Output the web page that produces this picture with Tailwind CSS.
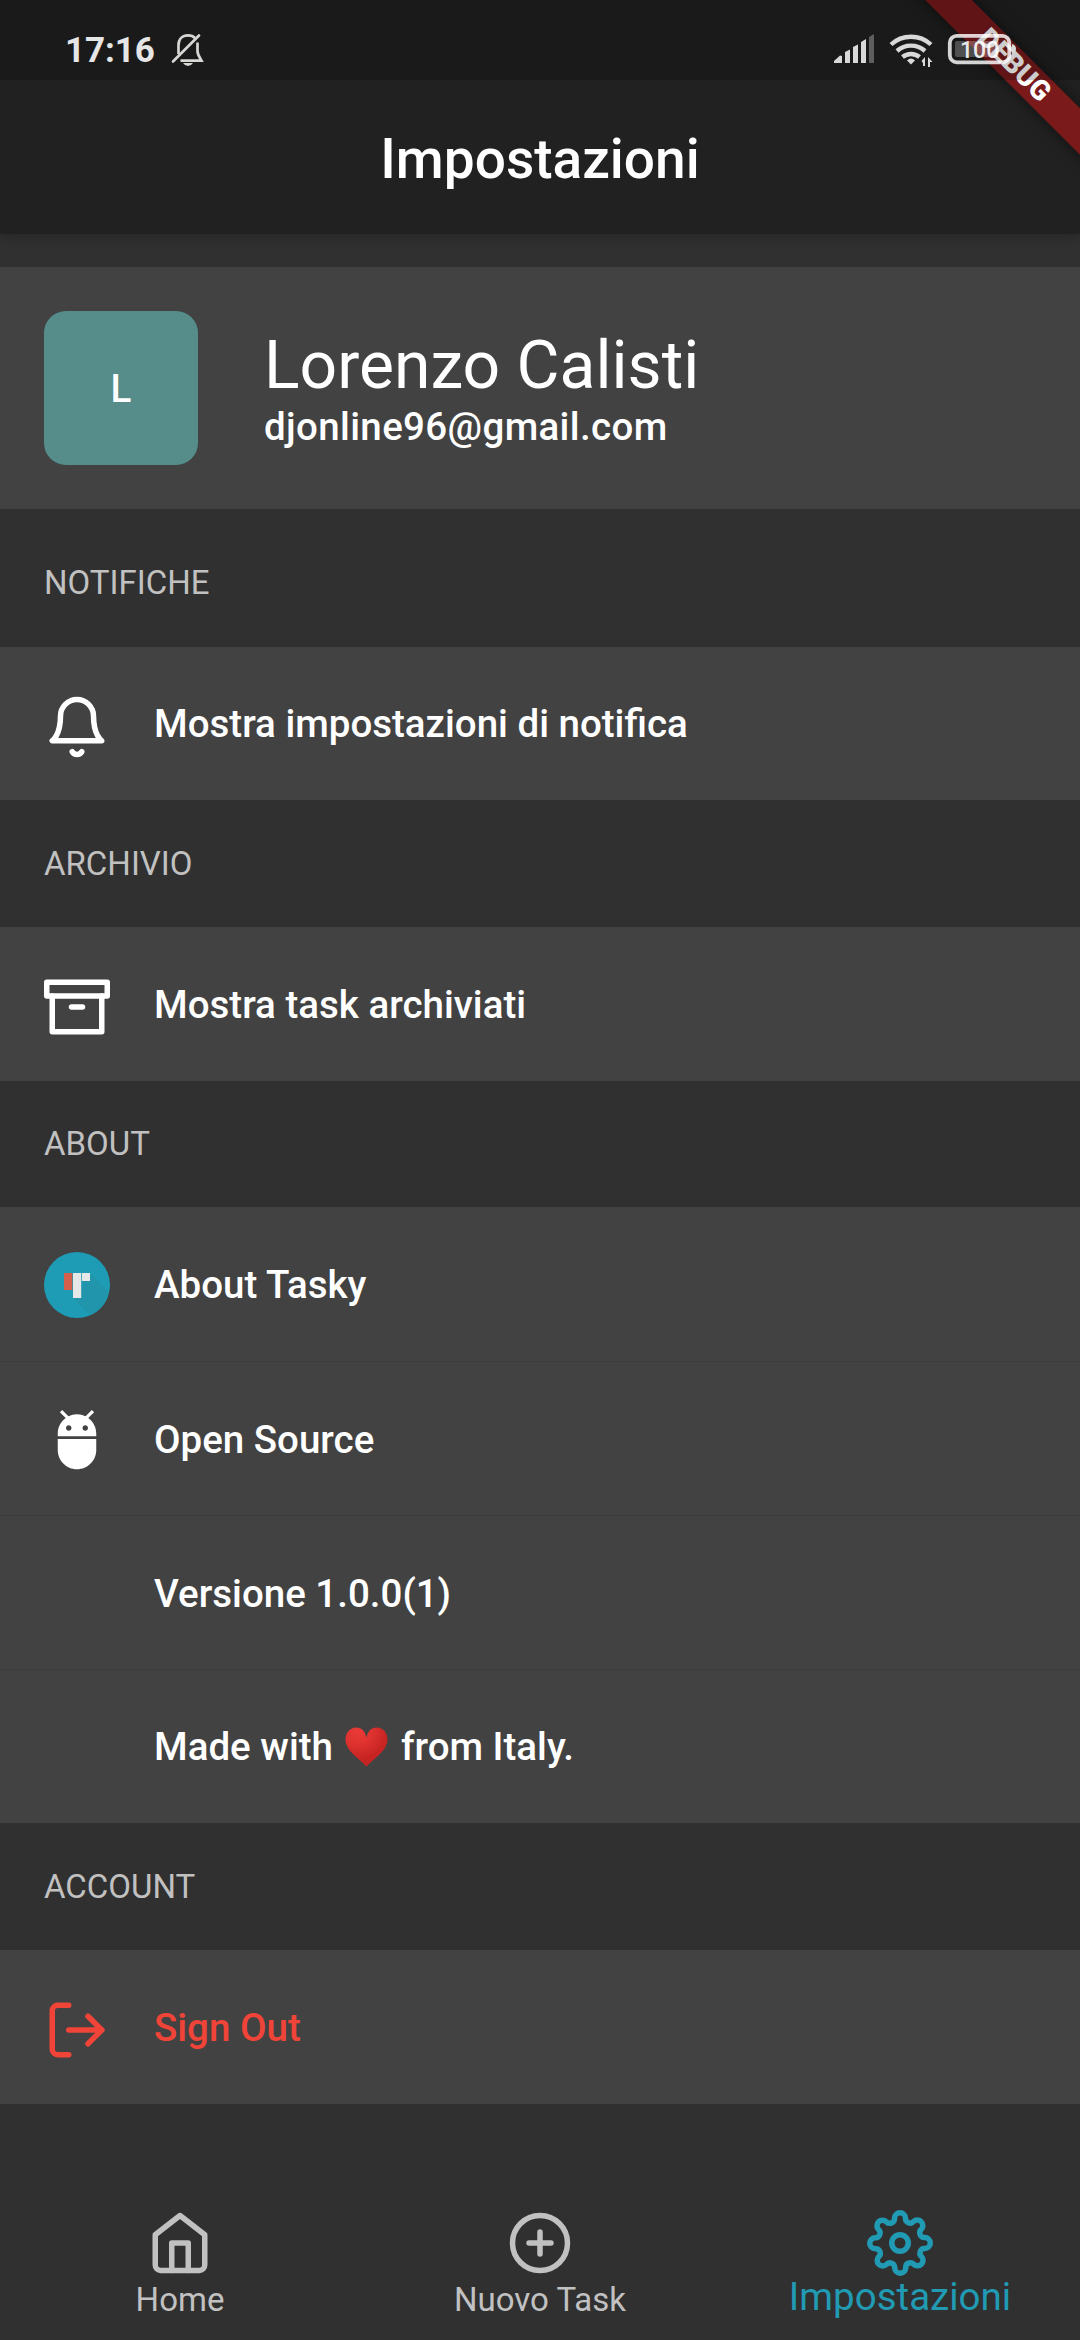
<!DOCTYPE html>
<html lang="it">
<head>
<meta charset="utf-8">
<title>Impostazioni</title>
<script src="https://cdn.jsdelivr.net/npm/@tailwindcss/browser@4"></script>
</head>
<body class="bg-[#303030]">
<div class="relative flex h-[2340px] w-[1080px] flex-col overflow-hidden bg-[#303030] font-['Roboto',sans-serif] text-[38.5px] leading-[45px] font-medium text-white">

  <!-- App bar -->
  <header class="relative z-10 flex h-[234px] shrink-0 items-center justify-center bg-[#212121] pt-[83px] shadow-[0_3px_12px_rgba(0,0,0,0.2)]">
    <h1 class="text-[55px] leading-[64px] font-medium">Impostazioni</h1>
  </header>

  <!-- Debug ribbon -->
  <div class="absolute top-[49px] left-[864px] z-20 flex h-[33px] w-[300px] rotate-45 items-center justify-center bg-[#7a1a1b] pb-0.5 text-[28px] leading-[33px] font-black shadow-[0_0_16px_rgba(0,0,0,0.5)]">DEBUG</div>

  <!-- Status bar -->
  <div class="absolute inset-x-0 top-0 z-30 flex h-20 bg-black/20 pl-[65px] text-[#e6e6e6]">
    <span class="mt-[30px] w-[106px] text-[35px] leading-[41px] font-bold tracking-[-0.1px]">17:16</span>
    <svg class="mt-[33px] h-[34px] w-[34px]" viewBox="0 0 34 34" fill="none" stroke="#d6d8d4" stroke-width="2.7">
      <path d="M7.500 21V12C7.500 6 11.500 2.400 17 2.400C20 2.400 22.500 3.400 24 5.200M26.500 9.500V18C26.500 22 29 25 30.500 27.600H9.500"/>
      <path d="M28 2.500L2 28.500" stroke-linecap="round"/>
      <path d="M12 30H22Q20 33 17 33T12 30Z" fill="#d6d8d4" stroke="none"/>
    </svg>
    <svg class="ml-[629px] h-20 w-[186px]" viewBox="834 0 186 80" fill="#d9d9d9">
      <path d="M834 63V61L840 55.500L842 56V63ZM845 63V52L850 49.500V63ZM853 63V47L858 44.500V63ZM861 63V42L866 39V63Z"/>
      <path d="M869 63V37L874 34V63Z" fill="#5e5e5e"/>
      <g fill="none" stroke="#d9d9d9" stroke-width="4.4">
        <path d="M891 44.500A29.500 29.500 0 0 1 931 44.500M897 51A21 21 0 0 1 925 51M902.500 57A13.500 13.500 0 0 1 919.500 57"/>
      </g>
      <path d="M907 60.500Q911 56.500 915 60.500L911 64.500ZM925 57V66H923V63L921.500 61ZM928 67V57L932.500 62H930V67Z"/>
      <rect x="955" y="41" width="44" height="16" rx="2" fill="#fff" fill-opacity=".24"/>
      <rect x="949.800" y="35.800" width="59.500" height="26.500" rx="7" fill="none" stroke="#fff" stroke-opacity=".82" stroke-width="3.800"/>
      <path d="M1012 44Q1016 45 1016 49T1012 54Z"/>
      <text x="960" y="58" font-size="23" font-weight="500" fill="#fff" fill-opacity=".9">100</text>
    </svg>
  </div>

  <!-- Profile -->
  <section class="mt-[33px] flex h-[242px] shrink-0 items-center gap-[66px] bg-[#424242] px-11">
    <div class="flex h-[154px] w-[154px] items-center justify-center rounded-[22px] bg-[#568d8b]">L</div>
    <div>
      <div class="text-[66px] leading-[77px] font-normal">Lorenzo Calisti</div>
      <div class="tracking-[0.35px]">djonline96@gmail.com</div>
    </div>
  </section>

  <h2 class="mt-[11px] flex h-[127px] shrink-0 items-center px-11 pb-[2px] text-[33px] font-normal text-[#c1c1c1]">NOTIFICHE</h2>
  <div class="flex h-[153px] shrink-0 items-center gap-11 bg-[#424242] px-11">
    <svg class="mt-[6px] h-[66px] w-[66px]" viewBox="0 0 24 24" fill="none" stroke="currentColor" stroke-width="2" stroke-linecap="round" stroke-linejoin="round"><path d="M18 8A6 6 0 0 0 6 8c0 7-3 9-3 9h18s-3-2-3-9"/><path d="M13.730 21a2 2 0 0 1-3.460 0"/></svg>
    <span>Mostra impostazioni di notifica</span>
  </div>

  <h2 class="flex h-[127px] shrink-0 items-center px-11 text-[33px] font-normal text-[#c1c1c1]">ARCHIVIO</h2>
  <div class="flex h-[154px] shrink-0 items-center gap-11 bg-[#424242] px-11">
    <svg class="mt-[6px] h-[66px] w-[66px]" viewBox="0 0 24 24" fill="none" stroke="currentColor" stroke-width="2" stroke-linecap="round" stroke-linejoin="round"><path d="M21 8v13H3V8"/><path d="M1 3h22v5H1z"/><path d="M10 12h4"/></svg>
    <span>Mostra task archiviati</span>
  </div>

  <h2 class="flex h-[126px] shrink-0 items-center px-11 pb-[2px] text-[33px] font-normal text-[#c1c1c1]">ABOUT</h2>
  <div class="flex h-[616px] shrink-0 flex-col divide-y divide-[#3c3c3c] bg-[#424242]">
    <div class="flex h-[155px] items-center gap-11 px-11 pt-px">
      <svg class="h-[66px] w-[66px]" viewBox="0 0 66 66">
        <circle cx="33" cy="33" r="33" fill="#1f9cb5"/>
        <path d="M20 38L29 38V46L46.500 63.200A33 33 0 0 0 65 40L46 21V29H37Z" fill="#2095ac"/>
        <path d="M20 21h8.300v17H20z" fill="#d4604b"/>
        <path d="M29 21h8.200v25H29zM38 21h8v8h-8z" fill="#e6e8e8"/>
      </svg>
      <span>About Tasky</span>
    </div>
    <div class="flex h-[154px] items-center gap-11 px-11 pt-px">
      <svg class="h-[66px] w-[66px]" viewBox="0 0 24 24" fill="currentColor"><path d="M5 16c0 3.870 3.130 7 7 7s7-3.130 7-7v-4H5v4zM16.120 4.370l2.100-2.100-.82-.83-2.300 2.310C14.160 3.280 13.120 3 12 3s-2.160.28-3.090.75L6.600 1.440l-.82.83 2.100 2.100C6.140 5.640 5 7.680 5 10v1h14v-1c0-2.320-1.140-4.360-2.880-5.630zM9 9c-.55 0-1-.45-1-1s.45-1 1-1 1 .45 1 1-.45 1-1 1zm6 0c-.55 0-1-.45-1-1s.45-1 1-1 1 .45 1 1-.45 1-1 1z"/></svg>
      <span>Open Source</span>
    </div>
    <div class="flex h-[154px] items-center pt-px pl-[154px]">Versione 1.0.0(1)</div>
    <div class="flex h-[153px] items-center pl-[154px]">
      <span>Made with</span>
      <svg class="mr-[13px] ml-3 h-[40px] w-[43px]" viewBox="0 0 43 40">
        <defs><radialGradient id="heart" cx=".3" cy=".1" r=".7"><stop offset="0" stop-color="#e93a36"/><stop offset=".45" stop-color="#e03330"/><stop offset="1" stop-color="#c62422"/></radialGradient></defs>
        <path d="M21.500 11C20.500 4.500 16.500 .5 11.500 .5C5 .5 .5 5.500 .5 12.500C.5 23.500 13.500 31 21.500 39.500C29.500 31 42.500 23.500 42.500 12.500C42.500 5.500 38 .5 31.500 .5C26.500 .5 22.500 4.500 21.500 11Z" fill="url(#heart)"/>
      </svg>
      <span>from Italy.</span>
    </div>
  </div>

  <h2 class="flex h-[127px] shrink-0 items-center px-11 text-[33px] font-normal text-[#c1c1c1]">ACCOUNT</h2>
  <div class="flex h-[154px] shrink-0 items-center gap-11 bg-[#424242] px-11 text-[#f04438]">
    <svg class="mt-[6px] h-[66px] w-[66px]" viewBox="0 0 24 24" fill="none" stroke="currentColor" stroke-width="2" stroke-linecap="round" stroke-linejoin="round"><path d="M9 21H5a2 2 0 0 1-2-2V5a2 2 0 0 1 2-2h4"/><path d="M16 17l5-5-5-5"/><path d="M21 12H9"/></svg>
    <span>Sign Out</span>
  </div>

  <!-- Bottom navigation -->
  <nav class="mt-auto grid h-[156px] shrink-0 grid-cols-3 border-t border-[#2e2e2e] pt-[25px] text-[33px] font-normal text-[#c1c1c1]">
    <div class="flex flex-col items-center">
      <svg class="h-[66px] w-[66px]" viewBox="0 0 24 24" fill="none" stroke="currentColor" stroke-width="2" stroke-linecap="round" stroke-linejoin="round"><path d="M3 9l9-7 9 7v11a2 2 0 0 1-2 2H5a2 2 0 0 1-2-2z"/><path d="M9 22V12h6v10"/></svg>
      <span class="mt-1 leading-[39px]">Home</span>
    </div>
    <div class="flex flex-col items-center">
      <svg class="h-[66px] w-[66px]" viewBox="0 0 24 24" fill="none" stroke="currentColor" stroke-width="2" stroke-linecap="round" stroke-linejoin="round"><circle cx="12" cy="12" r="10"/><path d="M12 8v8M8 12h8"/></svg>
      <span class="mt-1 leading-[39px]">Nuovo Task</span>
    </div>
    <div class="flex flex-col items-center text-[#219ab3]">
      <svg class="h-[66px] w-[66px]" viewBox="0 0 24 24" fill="none" stroke="currentColor" stroke-width="2" stroke-linecap="round" stroke-linejoin="round"><circle cx="12" cy="12" r="3"/><path d="M19.400 15a1.650 1.650 0 0 0 .33 1.820l.06.06a2 2 0 0 1 0 2.830 2 2 0 0 1-2.830 0l-.06-.06a1.650 1.650 0 0 0-1.820-.33 1.650 1.650 0 0 0-1 1.510V21a2 2 0 0 1-2 2 2 2 0 0 1-2-2v-.09A1.650 1.650 0 0 0 9 19.400a1.650 1.650 0 0 0-1.820.33l-.06.06a2 2 0 0 1-2.830 0 2 2 0 0 1 0-2.830l.06-.06a1.650 1.650 0 0 0 .33-1.820 1.650 1.650 0 0 0-1.510-1H3a2 2 0 0 1-2-2 2 2 0 0 1 2-2h.09A1.650 1.650 0 0 0 4.600 9a1.650 1.650 0 0 0-.33-1.820l-.06-.06a2 2 0 0 1 0-2.830 2 2 0 0 1 2.830 0l.06.06a1.650 1.650 0 0 0 1.820.33H9a1.650 1.650 0 0 0 1-1.510V3a2 2 0 0 1 2-2 2 2 0 0 1 2 2v.09a1.650 1.650 0 0 0 1 1.510 1.650 1.650 0 0 0 1.820-.33l.06-.06a2 2 0 0 1 2.830 0 2 2 0 0 1 0 2.830l-.06.06a1.650 1.650 0 0 0-.33 1.820V9a1.650 1.650 0 0 0 1.510 1H21a2 2 0 0 1 2 2 2 2 0 0 1-2 2h-.09a1.650 1.650 0 0 0-1.510 1z"/></svg>
      <span class="-mt-0.5 text-[38.5px] leading-[45px]">Impostazioni</span>
    </div>
  </nav>
</div>
</body>
</html>
